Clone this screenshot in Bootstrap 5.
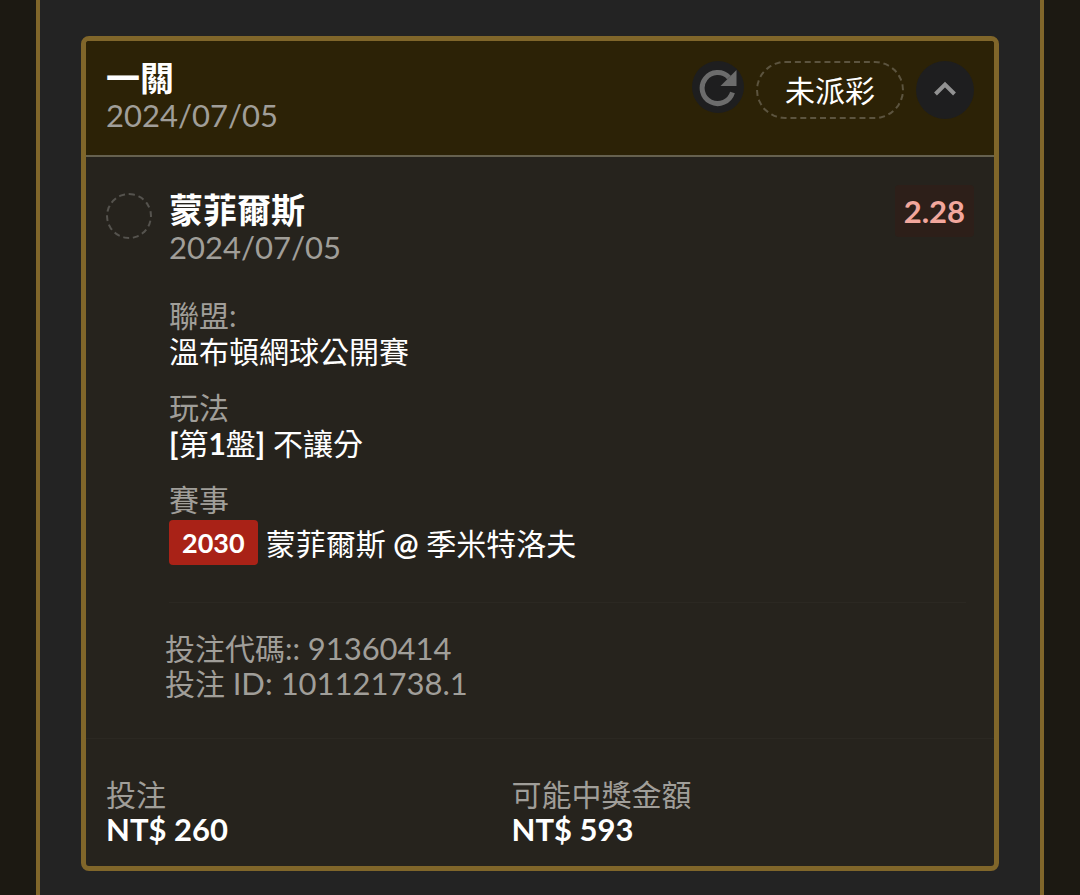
<!DOCTYPE html>
<html lang="zh-Hant" data-bs-theme="dark">
<head>
<meta charset="utf-8">
<meta name="viewport" content="width=device-width, initial-scale=1">
<title>投注紀錄</title>
<link href="https://cdn.jsdelivr.net/npm/bootstrap@5.3.0/dist/css/bootstrap.min.css" rel="stylesheet">
<style>
  :root {
    --gold: #80662a;
    --muted: #a09e99;
  }
  body {
    background: #1c1912;
    color: #fff;
    font-family: Lato, "Noto Sans CJK TC", sans-serif;
    font-size: 30px;
    line-height: 36px;
  }
  .frame {
    background: #232323;
    border: solid var(--gold);
    border-width: 0 4px;
    padding: 36px 41px 24px;
    margin: 0 36px;
  }
  .slip {
    background: #26231d;
    border: 5px solid var(--gold);
    border-radius: 8px;
  }
  .slip-head {
    background: #2c2206;
    border-bottom: 2px solid #66614f;
    padding: 20px;
  }
  .title-text { font-size: 34px; line-height: 34px; font-weight: 700; }
  .num { font-size: 31px; }
  .date { line-height: 40px; }
  .muted { color: var(--muted); }
  .refresh, .toggle {
    background: #1e1e1f;
    border: 0;
    border-radius: 50%;
    padding: 0;
    display: flex;
    align-items: center;
    justify-content: center;
  }
  .refresh { width: 52px; height: 52px; }
  .toggle { width: 58px; height: 58px; }
  .state {
    border: 2px dashed #5c543f;
    border-radius: 29px;
    height: 58px;
    padding: 0 27px;
  }
  .ring {
    width: 46px;
    height: 46px;
    border: 2px dashed #55534e;
    border-radius: 50%;
  }
  .pick { padding: 28px 20px 37px; gap: 17px; }
  .odds {
    background: #2d1f19;
    color: #f2a79d;
    font-size: 31px;
    font-weight: 700;
    padding: 8px 9px;
    border-radius: 4px;
  }
  .facts { margin: 30px 0 0; }
  .facts dt { font-weight: 400; color: var(--muted); }
  .facts dd { margin-bottom: 20px; }
  .facts .match { margin: 3px 0 0; }
  .code {
    background: #a92217;
    border-radius: 4px;
    font-size: 27px;
    font-weight: 700;
    line-height: 45px;
    padding: 0 13px;
  }
  .ids {
    border-top: 1px solid #2b2822;
    margin: 0 28px 0 83px;
    padding: 28px 0 37px;
    line-height: 35px;
  }
  .ids div { margin-left: -4px; }
  .totals { border-top: 1px solid #2b2822; padding: 38px 77px 19px 20px; line-height: 35px; }
</style>
</head>
<body>
<main class="frame min-vh-100">
  <article class="slip overflow-hidden">
    <header class="slip-head d-flex justify-content-between align-items-start">
      <div>
        <h1 class="title-text mb-0">一關</h1>
        <div class="num date muted">2024/07/05</div>
      </div>
      <div class="d-flex align-items-start gap-2">
        <button class="refresh me-1" type="button" aria-label="重新整理">
          <svg width="40" height="40" viewBox="0 0 40 40" fill="none" aria-hidden="true">
            <path d="M34.500 25.500A15.500 15.500 0 1 1 31 10.500" stroke="#6c6c6c" stroke-width="5"/>
            <path d="M38.500 3v16H22.500z" fill="#6c6c6c"/>
          </svg>
        </button>
        <div class="state d-flex align-items-center me-1">未派彩</div>
        <button class="toggle" type="button" aria-label="收合">
          <svg width="24" height="20" viewBox="0 0 24 20" fill="none" aria-hidden="true">
            <path d="M2.500 14L12 4.500 21.500 14" stroke="#929292" stroke-width="4"/>
          </svg>
        </button>
      </div>
    </header>

    <section class="pick d-flex align-items-start">
      <div class="ring flex-shrink-0 mt-2"></div>
      <div class="flex-grow-1 mt-2">
        <h2 class="title-text mb-0">蒙菲爾斯</h2>
        <div class="num date muted">2024/07/05</div>
        <dl class="facts">
          <dt>聯盟:</dt>
          <dd>溫布頓網球公開賽</dd>
          <dt>玩法</dt>
          <dd><b>[</b>第<b>1</b>盤<b>]</b> 不讓分</dd>
          <dt>賽事</dt>
          <dd class="match d-flex align-items-center gap-2">
            <span class="code">2030</span>
            <span>蒙菲爾斯 <b>@</b> 季米特洛夫</span>
          </dd>
        </dl>
      </div>
      <div class="odds">2.28</div>
    </section>

    <section class="ids muted">
      <div>投注代碼:: <span class="num">91360414</span></div>
      <div>投注 <span class="num">ID: 101121738.1</span></div>
    </section>

    <footer class="totals">
      <div class="row g-0">
        <div class="col">
          <div class="muted">投注</div>
          <div class="num fw-bold">NT$ 260</div>
        </div>
        <div class="col">
          <div class="muted">可能中獎金額</div>
          <div class="num fw-bold">NT$ 593</div>
        </div>
      </div>
    </footer>
  </article>
</main>
<script src="https://cdn.jsdelivr.net/npm/bootstrap@5.3.0/dist/js/bootstrap.bundle.min.js"></script>
</body>
</html>
